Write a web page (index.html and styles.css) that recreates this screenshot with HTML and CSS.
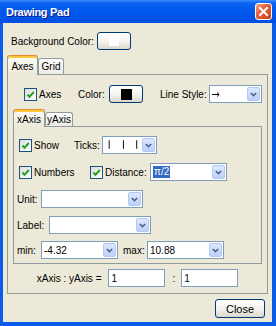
FILE: index.html
```html
<!DOCTYPE html>
<html lang="en">
<head>
    <meta charset="UTF-8">
    <title>Drawing Pad</title>
    <link rel="stylesheet" href="styles.css">
</head>
<body>

<div class="window">
    <div class="titlebar">
        <span class="title">Drawing Pad</span>
        <span class="close-x">
            <svg width="11" height="11" viewBox="0 0 11 11"><path d="M2 2 L9 9 M9 2 L2 9" stroke="#fff" stroke-width="2" stroke-linecap="square"/></svg>
        </span>
    </div>

    <div class="dialog">
        <div class="bg-row">
            <span class="lbl l-bg">Background Color:</span>
            <span class="btn color-btn"><span class="swatch white"></span></span>
        </div>

        <!-- outer tabs -->
        <div class="tabs">
            <span class="tab active t-axes">Axes</span>
            <span class="tab t-grid">Grid</span>
        </div>
        <div class="pane outer">
            <div class="row axes-row">
                <span class="check g-axes"><span class="cb"><svg width="11" height="11" viewBox="0 0 11 11"><path d="M2.5 5.5 L4.5 7.8 L8.8 3" fill="none" stroke="#21A121" stroke-width="2"/></svg></span>Axes</span>
                <span class="lbl l-color">Color:</span>
                <span class="btn color-btn c2"><span class="swatch black"></span></span>
                <span class="lbl l-style">Line Style:</span>
                <span class="combo c-style">
                    <span class="val"><svg width="12" height="9" viewBox="0 0 12 9"><path d="M2 4.5 H9 M7 2.5 L9.2 4.5 L7 6.5" fill="none" stroke="#000" stroke-width="1"/></svg></span>
                    <span class="arrow"><svg width="7" height="5" viewBox="0 0 7 5"><path d="M0.8 1 L3.5 3.6 L6.2 1" fill="none" stroke="#4D6185" stroke-width="1.6"/></svg></span>
                </span>
            </div>

            <!-- inner tabs -->
            <div class="tabs inner-tabs">
                <span class="tab active t-x">xAxis</span>
                <span class="tab t-y">yAxis</span>
            </div>
            <div class="pane inner">
                <div class="row">
                    <span class="check g-show"><span class="cb"><svg width="11" height="11" viewBox="0 0 11 11"><path d="M2.5 5.5 L4.5 7.8 L8.8 3" fill="none" stroke="#21A121" stroke-width="2"/></svg></span>Show</span>
                    <span class="lbl l-ticks">Ticks:</span>
                    <span class="combo c-ticks">
                        <span class="val"><svg width="40" height="18" viewBox="0 0 40 18"><path d="M6.5 4 V13 M21.5 4 V13 M35.5 4 V13" stroke="#000" stroke-width="1"/></svg></span>
                        <span class="arrow"><svg width="7" height="5" viewBox="0 0 7 5"><path d="M0.8 1 L3.5 3.6 L6.2 1" fill="none" stroke="#4D6185" stroke-width="1.6"/></svg></span>
                    </span>
                </div>
                <div class="row r2">
                    <span class="check g-num"><span class="cb"><svg width="11" height="11" viewBox="0 0 11 11"><path d="M2.5 5.5 L4.5 7.8 L8.8 3" fill="none" stroke="#21A121" stroke-width="2"/></svg></span>Numbers</span>
                    <span class="check g-dist"><span class="cb"><svg width="11" height="11" viewBox="0 0 11 11"><path d="M2.5 5.5 L4.5 7.8 L8.8 3" fill="none" stroke="#21A121" stroke-width="2"/></svg></span>Distance:</span>
                    <span class="combo c-dist">
                        <span class="val"><span class="sel">π/2</span></span>
                        <span class="arrow"><svg width="7" height="5" viewBox="0 0 7 5"><path d="M0.8 1 L3.5 3.6 L6.2 1" fill="none" stroke="#4D6185" stroke-width="1.6"/></svg></span>
                    </span>
                </div>
                <div class="row r3">
                    <span class="lbl l-unit">Unit:</span>
                    <span class="combo c-wide">
                        <span class="val"></span>
                        <span class="arrow"><svg width="7" height="5" viewBox="0 0 7 5"><path d="M0.8 1 L3.5 3.6 L6.2 1" fill="none" stroke="#4D6185" stroke-width="1.6"/></svg></span>
                    </span>
                </div>
                <div class="row r4">
                    <span class="lbl l-label">Label:</span>
                    <span class="combo c-wide">
                        <span class="val"></span>
                        <span class="arrow"><svg width="7" height="5" viewBox="0 0 7 5"><path d="M0.8 1 L3.5 3.6 L6.2 1" fill="none" stroke="#4D6185" stroke-width="1.6"/></svg></span>
                    </span>
                </div>
                <div class="row r5">
                    <span class="lbl l-min">min:</span>
                    <span class="combo c-range">
                        <span class="val">-4.32</span>
                        <span class="arrow"><svg width="7" height="5" viewBox="0 0 7 5"><path d="M0.8 1 L3.5 3.6 L6.2 1" fill="none" stroke="#4D6185" stroke-width="1.6"/></svg></span>
                    </span>
                    <span class="lbl l-max">max:</span>
                    <span class="combo c-range">
                        <span class="val">10.88</span>
                        <span class="arrow"><svg width="7" height="5" viewBox="0 0 7 5"><path d="M0.8 1 L3.5 3.6 L6.2 1" fill="none" stroke="#4D6185" stroke-width="1.6"/></svg></span>
                    </span>
                </div>
            </div>

            <div class="ratio">
                <span>xAxis : yAxis =</span>
                <span class="field">1</span>
                <span class="colon">:</span>
                <span class="field f2">1</span>
            </div>
        </div>

        <div class="footer">
            <span class="btn close-btn">Close</span>
        </div>
    </div>
</div>

</body>
</html>
```

FILE: styles.css
```css
* {
    box-sizing: border-box;
}

body {
    margin: 0;
    font-family: "Liberation Sans", Arial, sans-serif;
    font-size: 10px;
    color: #000;
}

.window {
    width: 276px;
    height: 326px;
    background: #0A5CE8;
    display: flex;
    flex-direction: column;
}

.titlebar {
    height: 23px;
    flex: none;
    display: flex;
    align-items: center;
    justify-content: space-between;
    padding: 0 4px 0 6px;
    background: linear-gradient(to bottom, #3C8DFF 0, #0C64F2 3px, #0058EE 45%, #0050E0 100%);
}

.title {
    color: #fff;
    font-weight: bold;
    font-size: 11px;
    letter-spacing: -0.3px;
    text-shadow: 1px 1px 0 #0A1A8A;
}

.close-x {
    width: 17px;
    height: 17px;
    border: 1px solid #fff;
    border-radius: 3px;
    background: linear-gradient(135deg, #F3A58C 0, #E4603C 40%, #C8401A 100%);
    display: flex;
    align-items: center;
    justify-content: center;
}

.dialog {
    flex: 1;
    margin: 0 4px 4px 3px;
    background: #ECE9D8;
    padding: 9px 4px 4px 4px;
    display: flex;
    flex-direction: column;
}

.lbl {
    flex: none;
}

.bg-row {
    height: 18px;
    display: flex;
    align-items: center;
    padding-left: 4px;
}

.l-bg {
    width: 86px;
}

/* buttons */
.btn {
    display: flex;
    align-items: center;
    justify-content: center;
    border: 1px solid #003C74;
    border-radius: 3px;
    background: linear-gradient(to bottom, #FFFFFF 0, #F3F2EC 55%, #DCD7CC 100%);
}

.color-btn {
    width: 34px;
    height: 18px;
}

.swatch {
    width: 10px;
    height: 10px;
}

.swatch.white {
    background: #fff;
}

.swatch.black {
    width: 11px;
    height: 11px;
    background: #000;
}

/* tabs */
.tabs {
    margin-top: 5px;
    height: 19px;
    display: flex;
    align-items: flex-end;
}

.tab {
    height: 16px;
    display: flex;
    align-items: center;
    justify-content: center;
    border: 1px solid #919B9C;
    border-bottom: none;
    border-radius: 3px 3px 0 0;
    background: linear-gradient(to bottom, #FFFFFF, #ECEBE6);
}

.tab.active {
    height: 20px;
    margin-bottom: -1px;
    border-top: 1px solid #E68B2C;
    box-shadow: inset 0 2px 0 #FFC83C;
    padding-top: 1px;
    background: linear-gradient(to bottom, #FCFCFB, #ECE9D8);
    position: relative;
    z-index: 1;
}

.t-axes { width: 31px; }
.t-grid { width: 26px; }

.pane {
    border: 1px solid #919B9C;
    background: #ECE9D8;
    display: flex;
    flex-direction: column;
}

.outer {
    height: 220px;
    padding: 10px 5px 6px 5px;
}

.row {
    height: 18px;
    display: flex;
    align-items: center;
}

.axes-row {
    padding-left: 11px;
}

.check {
    display: flex;
    align-items: center;
    flex: none;
}

.cb {
    width: 13px;
    height: 13px;
    margin-right: 2px;
    border: 1px solid #1C5180;
    background: linear-gradient(135deg, #DCDCD7, #FFFFFF);
    display: flex;
}

.g-axes { width: 54px; }
.l-color { width: 31px; }
.l-style { width: 49px; margin-left: 17px; }

/* combo boxes */
.combo {
    height: 18px;
    border: 1px solid #7F9DB9;
    background: #fff;
    display: flex;
    flex: none;
}

.combo .val {
    flex: 1;
    display: flex;
    align-items: center;
    padding-left: 2px;
    overflow: hidden;
}

.combo .arrow {
    width: 13px;
    margin: 1px;
    border: 1px solid #B4C8F6;
    border-radius: 2px;
    background: linear-gradient(to bottom, #DDE8FE, #BDD0FA);
    display: flex;
    align-items: center;
    justify-content: center;
}

.c-style { width: 53px; }
.c-style .val { padding-left: 0; }
.c-ticks { width: 55px; }
.c-ticks .val { padding-left: 0; }
.c-dist { width: 77px; }
.c-wide { width: 102px; }
.c-range { width: 77px; }

.sel {
    background: #316AC5;
    color: #fff;
    line-height: 12px;
    padding: 0 1px;
}

.inner-tabs {
    margin-top: 6px;
    height: 17px;
}

.inner-tabs .tab {
    height: 14px;
}

.inner-tabs .tab.active {
    height: 18px;
}

.t-x { width: 32px; }
.t-y { width: 28px; }

.inner {
    height: 138px;
    padding: 9px 5px 4px 3px;
}

.inner .check:first-child {
    margin-left: 2px;
}

.r2 { margin-top: 9px; }
.r3 { margin-top: 9px; }
.r4 { margin-top: 8px; }
.r5 { margin-top: 7px; }

.g-show { width: 55px; }
.l-ticks { width: 28px; }
.g-num { width: 71px; }
.g-dist { width: 60px; }
.l-unit { width: 24px; }
.l-label { width: 32px; }
.l-min { width: 24px; }
.l-max { width: 24px; margin-left: 5px; }

/* ratio row */
.ratio {
    margin-top: 5px;
    height: 18px;
    display: flex;
    align-items: center;
    justify-content: center;
}

.field {
    width: 57px;
    height: 18px;
    margin-left: 7px;
    border: 1px solid #7F9DB9;
    background: #fff;
    padding-left: 2px;
    display: flex;
    align-items: center;
}

.colon {
    margin-left: 7px;
}

.field.f2 {
    margin-left: 6px;
}

.footer {
    margin-top: 5px;
    display: flex;
    justify-content: flex-end;
    padding-right: 3px;
}

.close-btn {
    width: 50px;
    height: 19px;
    font-size: 11px;
}
```
